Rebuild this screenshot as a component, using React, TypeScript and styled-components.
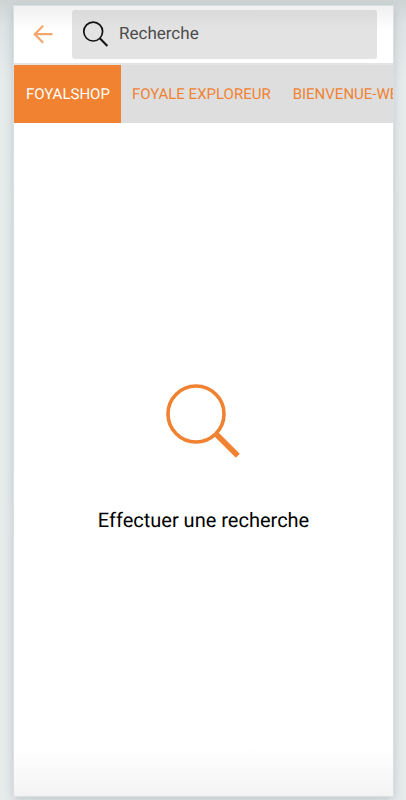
import React, { useState } from 'react';
import styled, { createGlobalStyle } from 'styled-components';

const ORANGE = '#f08232';

const GlobalStyle = createGlobalStyle`
  * { box-sizing: border-box; }
  body {
    margin: 0;
    font-family: Roboto, 'Liberation Sans', sans-serif;
    text-rendering: geometricPrecision;
    color: #000;
    background: #e3e8e9;
  }
`;

const Backdrop = styled.div`
  min-height: 100vh;
  display: flex;
  padding: 6px 13px 4px 14px;
  overflow: hidden;
  background: linear-gradient(to bottom, #ced3d4, #dde3e4 24px, #e6ecec 80px, #e6ebec);
`;

const Screen = styled.main`
  flex: 1;
  min-width: 0;
  display: flex;
  flex-direction: column;
  background: linear-gradient(to bottom, #f0f0f0, #fff 24px, #fff calc(100% - 48px), #f3f3f3);
  box-shadow: 0 0 0 1px #dadfe2, 0 3px 10px rgba(80, 90, 100, 0.28);
`;

const Header = styled.header`
  display: flex;
  align-items: center;
  padding: 4px 16px 4px 14px;
`;

const BackButton = styled.button`
  width: 30px;
  height: 30px;
  margin-right: 14px;
  padding: 0;
  display: grid;
  place-items: center;
  border: 0;
  background: none;
  color: #f3a66c;
  cursor: pointer;
`;

const SearchField = styled.label`
  flex: 1;
  min-width: 0;
  height: 49px;
  display: flex;
  align-items: center;
  gap: 10px;
  padding: 0 10px;
  border-radius: 3px;
  background: linear-gradient(to bottom, #dadada, #e3e3e3 20px);
`;

const SearchInput = styled.input`
  flex: 1;
  min-width: 0;
  height: 26px;
  padding: 0 0 2px;
  border: 0;
  outline: 0;
  background: none;
  font: 17px/24px Roboto, 'Liberation Sans', sans-serif;
  text-rendering: geometricPrecision;
  color: #444;
  &::placeholder { color: #4c4c4c; opacity: 1; }
`;

const Tabs = styled.div`
  display: flex;
  overflow: hidden;
  border-top: 2px solid #e4e4e4;
  background: #dedede;
`;

const Tab = styled.button<{ $active: boolean }>`
  flex: none;
  height: 58px;
  padding: 0 11px 0 12px;
  border: 0;
  white-space: nowrap;
  font: 15px/20px Roboto, 'Liberation Sans', sans-serif;
  text-rendering: geometricPrecision;
  color: ${(p) => (p.$active ? '#fff' : ORANGE)};
  background: ${(p) => (p.$active ? ORANGE : 'transparent')};
  cursor: pointer;

  & + & { padding: 0 11px; }
`;

const EmptyState = styled.section`
  flex: 1;
  display: flex;
  flex-direction: column;
  align-items: center;
  justify-content: center;
  gap: 48px;
  padding-bottom: 2px;
`;

const Message = styled.p`
  margin: 0;
  font-size: 20px;
  line-height: 28px;
`;

const TABS = ['FOYALSHOP', 'FOYALE EXPLOREUR', 'BIENVENUE-WEB'];

export default function App() {
  const [active, setActive] = useState(0);
  const [query, setQuery] = useState('');

  return (
    <Backdrop>
      <GlobalStyle />
      <Screen>
        <Header>
          <BackButton type="button" aria-label="Retour">
            <svg width="20" height="20" viewBox="0 0 20 20" fill="none" stroke="currentColor" strokeWidth="2.2">
              <path d="M19.5 9.2H2.2M10.2 0.8 1.8 9.2l8.4 8.6" />
            </svg>
          </BackButton>
          <SearchField>
            <svg width="27" height="27" viewBox="0 0 27 27" fill="none" stroke="#111" aria-hidden="true">
              <circle cx="11.2" cy="10.6" r="9.4" strokeWidth="1.7" />
              <path d="m17.8 17.2 7.6 7.8" strokeWidth="2" />
            </svg>
            <SearchInput
              type="text"
              aria-label="Recherche"
              placeholder="Recherche"
              value={query}
              onChange={(e) => setQuery(e.target.value)}
            />
          </SearchField>
        </Header>
        <Tabs role="tablist">
          {TABS.map((name, i) => (
            <Tab key={name} type="button" role="tab" aria-selected={i === active} $active={i === active} onClick={() => setActive(i)}>
              {name}
            </Tab>
          ))}
        </Tabs>
        <EmptyState>
          <svg width="76" height="74" viewBox="0 0 76 74" fill="none" stroke={ORANGE} aria-hidden="true">
            <circle cx="30" cy="30" r="28" strokeWidth="3.6" />
            <path d="m49.5 49.5 22.3 22.3" strokeWidth="5.6" />
          </svg>
          <Message>Effectuer une recherche</Message>
        </EmptyState>
      </Screen>
    </Backdrop>
  );
}
